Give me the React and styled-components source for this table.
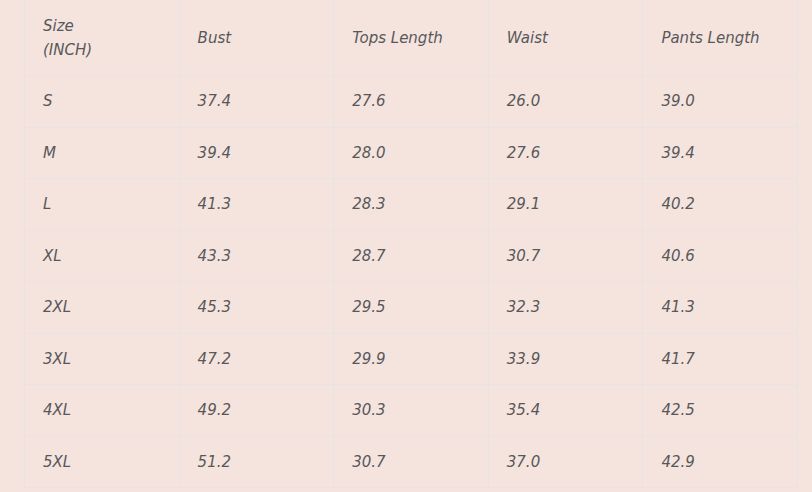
import React from "react";
import styled, { createGlobalStyle } from "styled-components";

const GlobalStyle = createGlobalStyle`
  html, body {
    margin: 0;
    padding: 0;
    background: #f5e4de;
  }
  body {
    font-family: "DejaVu Sans", "Liberation Sans", sans-serif;
  }
`;

const Page = styled.div`
  width: 812px;
  height: 492px;
  overflow: hidden;
  background: #f5e4de;
  padding: 0 14px 0 24px;
  box-sizing: border-box;
`;

const Table = styled.table`
  width: 774px;
  border-collapse: collapse;
  table-layout: fixed;
  margin-top: -1px;
`;

const Cell = styled.td`
  border: 1px solid #e8e3e4;
  padding: 0 18px;
  height: ${(p) => (p.$head ? "75px" : "50.5px")};
  font-style: italic;
  font-size: 15px;
  font-weight: 400;
  color: #58585a;
  text-align: left;
  vertical-align: middle;
  line-height: 24px;
  white-space: nowrap;
`;

const header = ["Size\n(INCH)", "Bust", "Tops Length", "Waist", "Pants Length"];
const rows = [
  ["S", "37.4", "27.6", "26.0", "39.0"],
  ["M", "39.4", "28.0", "27.6", "39.4"],
  ["L", "41.3", "28.3", "29.1", "40.2"],
  ["XL", "43.3", "28.7", "30.7", "40.6"],
  ["2XL", "45.3", "29.5", "32.3", "41.3"],
  ["3XL", "47.2", "29.9", "33.9", "41.7"],
  ["4XL", "49.2", "30.3", "35.4", "42.5"],
  ["5XL", "51.2", "30.7", "37.0", "42.9"],
];

export default function App() {
  return (
    <Page>
      <GlobalStyle />
      <Table>
        <tbody>
          <tr>
            {header.map((h, i) => (
              <Cell key={i} $head>
                {h.split("\n").map((line, j) => (
                  <React.Fragment key={j}>
                    {j > 0 && <br />}
                    {line}
                  </React.Fragment>
                ))}
              </Cell>
            ))}
          </tr>
          {rows.map((r, i) => (
            <tr key={i}>
              {r.map((v, j) => (
                <Cell key={j}>{v}</Cell>
              ))}
            </tr>
          ))}
        </tbody>
      </Table>
    </Page>
  );
}
